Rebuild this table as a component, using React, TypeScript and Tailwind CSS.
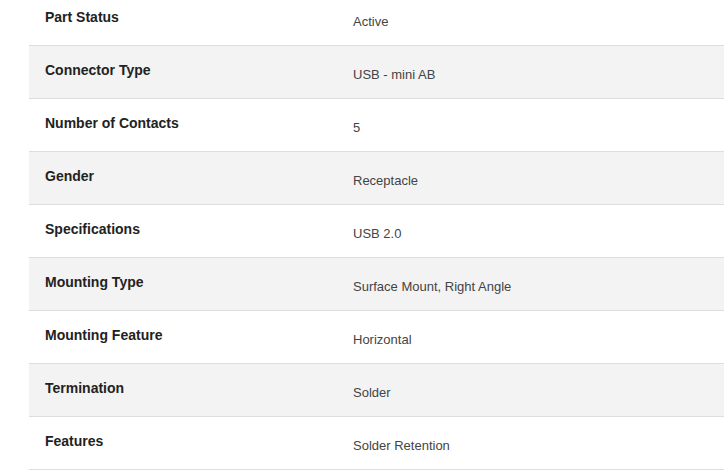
import React from 'react';

const specs: { label: string; value: string }[] = [
    { label: 'Part Status', value: 'Active' },
    { label: 'Connector Type', value: 'USB - mini AB' },
    { label: 'Number of Contacts', value: '5' },
    { label: 'Gender', value: 'Receptacle' },
    { label: 'Specifications', value: 'USB 2.0' },
    { label: 'Mounting Type', value: 'Surface Mount, Right Angle' },
    { label: 'Mounting Feature', value: 'Horizontal' },
    { label: 'Termination', value: 'Solder' },
    { label: 'Features', value: 'Solder Retention' },
];

export default function App() {
    return (
        <div className="h-[470px] w-[724px] overflow-hidden bg-white font-['Liberation_Sans',Arial,sans-serif]">
            <div className="ml-[29px] mt-[-7px] w-[740px]">
                {specs.map((spec, index) => (
                    <div
                        key={spec.label}
                        className={`flex h-[53px] border-b border-[#dddddd] ${index % 2 === 1 ? 'bg-[#f3f3f3]' : 'bg-white'}`}
                    >
                        <div className="w-[324px] pl-4 pt-[14px] text-[14px] leading-5 font-bold text-[#222222]">
                            {spec.label}
                        </div>
                        <div className="flex-1 pt-[19px] text-[13px] leading-5 text-[#444444]">
                            {spec.value}
                        </div>
                    </div>
                ))}
            </div>
        </div>
    );
}
